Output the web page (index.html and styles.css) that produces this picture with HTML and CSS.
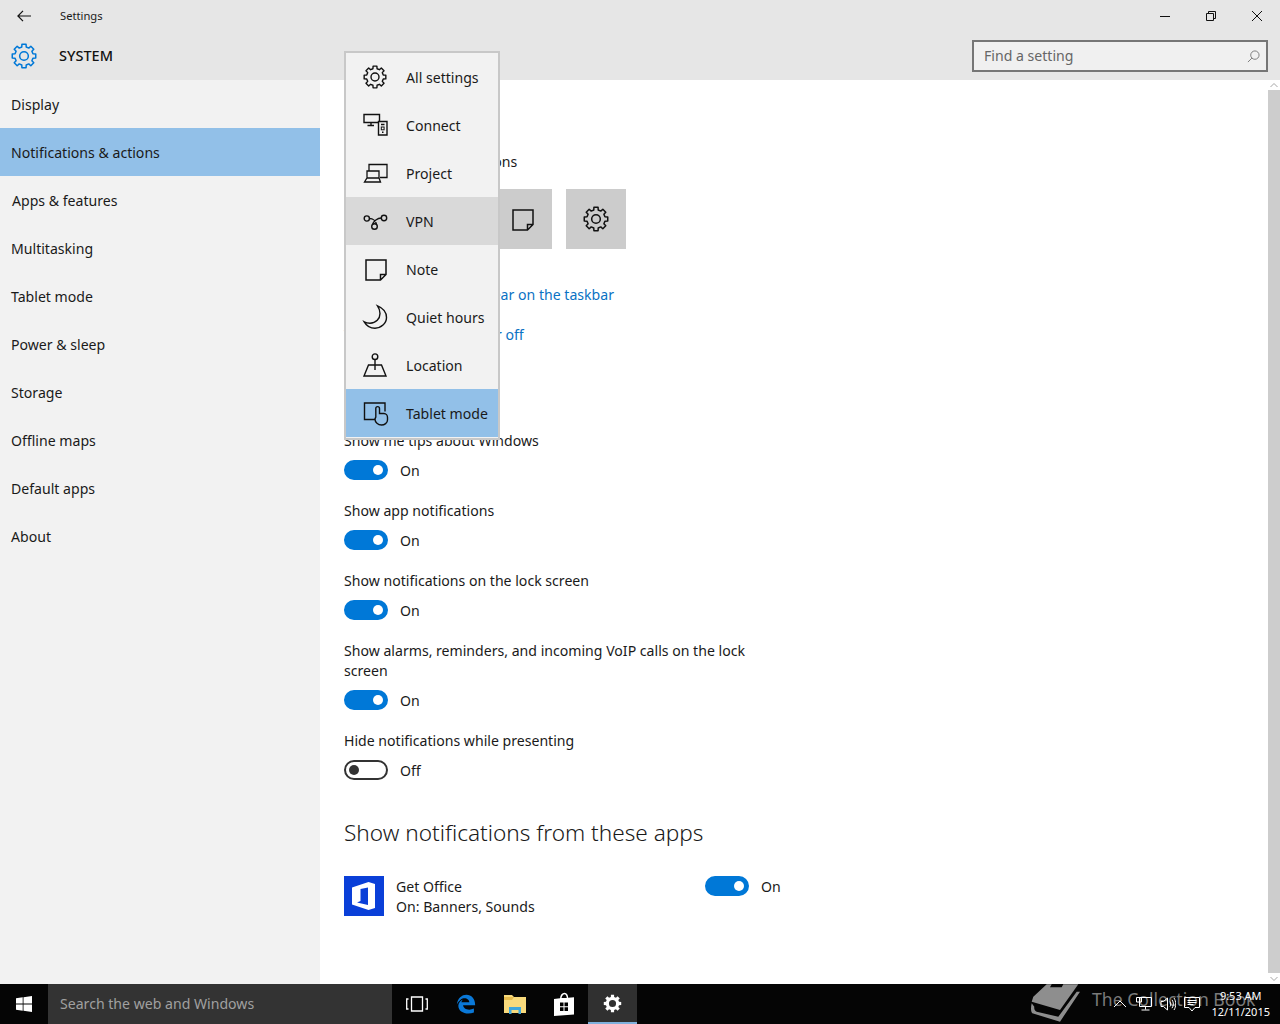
FILE: index.html
```html
<!DOCTYPE html>
<html lang="en">
<head>
<meta charset="utf-8">
<title>Settings</title>
<link rel="stylesheet" href="styles.css">
</head>
<body>
<svg class="defs" width="0" height="0" aria-hidden="true">
  <symbol id="gear" viewBox="0 0 24 24">
    <path fill="none" stroke="currentColor" stroke-width="1.4" stroke-linejoin="round" d="M20.25 9.94 22.83 10.09V13.91L20.25 14.06 19.29 16.38 21.01 18.31 18.31 21.01 16.38 19.29 14.06 20.25 13.91 22.83H10.09L9.94 20.25 7.62 19.29 5.69 21.01 2.99 18.31 4.71 16.38 3.75 14.06 1.17 13.91V10.09L3.75 9.94 4.71 7.62 2.99 5.69 5.69 2.99 7.62 4.71 9.94 3.75 10.09 1.17H13.91L14.06 3.75 16.38 4.71 18.31 2.99 21.01 5.69 19.29 7.62Z"/>
    <circle cx="12" cy="12" r="4" fill="none" stroke="currentColor" stroke-width="1.4"/>
  </symbol>
  <symbol id="note" viewBox="0 0 24 24">
    <path fill="none" stroke="currentColor" stroke-width="1.5" d="M3 3H23V17.500L17.500 23H3ZM23 17.500H17.500V23"/>
  </symbol>
</svg>

<div class="window">
  <header class="header">
    <div class="titlebar">
      <div class="title-left">
        <svg class="back" viewBox="0 0 14 12"><path fill="none" stroke="#111" stroke-width="1.2" d="M14 6H1M6 .8 .9 6 6 11.2"/></svg>
        <span class="app-name">Settings</span>
      </div>
      <div class="controls">
        <svg class="ctl" viewBox="0 0 12 12"><path stroke="#111" stroke-width="1" d="M1 6.5H11"/></svg>
        <svg class="ctl" viewBox="0 0 12 12"><path fill="none" stroke="#111" stroke-width="1" d="M1.500 3.500H8.500V10.500H1.500ZM3.500 3.500V1.500H10.500V8.500H8.500"/></svg>
        <svg class="ctl" viewBox="0 0 12 12"><path stroke="#111" stroke-width="1" d="M1 1 11 11M11 1 1 11"/></svg>
      </div>
    </div>
    <div class="subbar">
      <div class="section">
        <svg class="section-gear"><use href="#gear"/></svg>
        <span class="section-name">SYSTEM</span>
      </div>
      <div class="search">
        <span>Find a setting</span>
        <svg class="search-icon" viewBox="0 0 14 14"><path fill="none" stroke="#777" stroke-width="1" d="M13 5.500A4.500 4.500 0 1 1 4 5.500 4.500 4.500 0 1 1 13 5.500ZM5.300 8.700 1 13"/></svg>
      </div>
    </div>
  </header>

  <div class="main">
    <nav class="sidebar">
      <a class="nav-item">Display</a>
      <a class="nav-item is-active">Notifications &amp; actions</a>
      <a class="nav-item nav-item-wide">Apps &amp; features</a>
      <a class="nav-item">Multitasking</a>
      <a class="nav-item">Tablet mode</a>
      <a class="nav-item">Power &amp; sleep</a>
      <a class="nav-item">Storage</a>
      <a class="nav-item">Offline maps</a>
      <a class="nav-item">Default apps</a>
      <a class="nav-item">About</a>
    </nav>

    <section class="content">
      <h2 class="heading">Quick actions</h2>
      <p class="hint">Choose your quick actions</p>
      <div class="tiles">
        <div class="tile"></div>
        <div class="tile"></div>
        <div class="tile"><svg class="tile-icon"><use href="#note"/></svg></div>
        <div class="tile"><svg class="tile-gear"><use href="#gear"/></svg></div>
      </div>
      <a class="link link-first">Select which icons appear on the taskbar</a>
      <a class="link link-second">Turn system icons on or off</a>
      <h2 class="heading heading-notif">Notifications</h2>

      <div class="setting">
        <div class="setting-label">Show me tips about Windows</div>
        <div class="toggle-row"><span class="toggle is-on"><i></i></span><span class="toggle-text">On</span></div>
      </div>
      <div class="setting">
        <div class="setting-label">Show app notifications</div>
        <div class="toggle-row"><span class="toggle is-on"><i></i></span><span class="toggle-text">On</span></div>
      </div>
      <div class="setting">
        <div class="setting-label">Show notifications on the lock screen</div>
        <div class="toggle-row"><span class="toggle is-on"><i></i></span><span class="toggle-text">On</span></div>
      </div>
      <div class="setting">
        <div class="setting-label">Show alarms, reminders, and incoming VoIP calls on the lock screen</div>
        <div class="toggle-row"><span class="toggle is-on"><i></i></span><span class="toggle-text">On</span></div>
      </div>
      <div class="setting">
        <div class="setting-label">Hide notifications while presenting</div>
        <div class="toggle-row"><span class="toggle"><i></i></span><span class="toggle-text">Off</span></div>
      </div>

      <h2 class="heading heading-apps">Show notifications from these apps</h2>
      <div class="app-row">
        <div class="app-icon">
          <svg viewBox="0 0 40 40"><path fill="#fff" d="M8 11.500 24.500 6 31 8V32L24.500 34 8 28.500ZM13 26.500 24 29V11.500L16.500 13V25Z"/></svg>
        </div>
        <div class="app-text">
          <div>Get Office</div>
          <div>On: Banners, Sounds</div>
        </div>
        <div class="toggle-row"><span class="toggle is-on"><i></i></span><span class="toggle-text">On</span></div>
      </div>
    </section>

    <div class="scrollbar">
      <svg class="sb-arrow" viewBox="0 0 12 10"><path fill="none" stroke="#a6a6a6" stroke-width="1" d="M2.500 7 6 3.500 9.500 7"/></svg>
      <div class="sb-thumb"></div>
      <svg class="sb-arrow" viewBox="0 0 12 10"><path fill="none" stroke="#a6a6a6" stroke-width="1" d="M2.500 3 6 6.500 9.500 3"/></svg>
    </div>
  </div>

  <div class="menu">
    <div class="menu-item"><svg class="menu-icon"><use href="#gear"/></svg><span>All settings</span></div>
    <div class="menu-item">
      <svg class="menu-icon" viewBox="0 0 24 24"><path fill="none" stroke="#111" stroke-width="1.4" d="M15 9.500H1V1.500H16.500V8M4.500 12.500H11M8 9.500V12.500M15.500 8.500H24V22H15.500ZM18 11.500H21.500"/><rect x="18.300" y="14" width="2.800" height="2.800" fill="none" stroke="#111" stroke-width="1"/><rect x="19" y="18.500" width="1.500" height="1.500" fill="#111"/></svg>
      <span>Connect</span>
    </div>
    <div class="menu-item">
      <svg class="menu-icon" viewBox="0 0 24 24"><path fill="none" stroke="#111" stroke-width="1.3" d="M6 9.500V3.500H24V16.500H17M4 17V10H16V17M1.500 21 4 17H16L17.500 21Z"/></svg>
      <span>Project</span>
    </div>
    <div class="menu-item is-hover">
      <svg class="menu-icon" viewBox="0 0 24 24"><g fill="none" stroke="#111" stroke-width="1.4"><circle cx="3.800" cy="9.500" r="2.600"/><circle cx="21" cy="9" r="2.700"/><circle cx="11.500" cy="17.500" r="2.800"/><path d="M6.400 9.500C10 9.500 13 12 13.500 15.500M18.300 9C14.500 9 10.500 12 9.600 15.500"/></g></svg>
      <span>VPN</span>
    </div>
    <div class="menu-item"><svg class="menu-icon"><use href="#note"/></svg><span>Note</span></div>
    <div class="menu-item">
      <svg class="menu-icon" viewBox="0 0 24 24"><path fill="none" stroke="#111" stroke-width="1.4" d="M14.500 .800C20 3 23.500 7.500 23.500 12.500 23.500 18.500 18 23.200 12 23.200 7.500 23.200 3.500 20.800 1.200 16.800 3 17.800 5 18.200 7 18.200 13 18.200 17 13.800 17 8.500 17 6 16 3 14.500 .800Z"/></svg>
      <span>Quiet hours</span>
    </div>
    <div class="menu-item">
      <svg class="menu-icon" viewBox="0 0 24 24"><g fill="none" stroke="#111" stroke-width="1.4"><circle cx="12" cy="3.700" r="2.800"/><path d="M12 6.500V17M5.500 12H18.500L23 23H1Z"/></g></svg>
      <span>Location</span>
    </div>
    <div class="menu-item is-selected">
      <svg class="menu-icon" viewBox="0 0 24 24"><g fill="none" stroke="#111" stroke-width="1.4"><path d="M12 18.500H1.500V2H22V10.500"/><path d="M12.800 16V7.500C12.800 5 16.500 5 16.500 7.500V12.500H21C23 12.500 24.500 14.500 24.500 16.500V19C24.500 22 21.500 24 18.500 24 15 24 12 21.500 12 18Z"/></g></svg>
      <span>Tablet mode</span>
    </div>
  </div>
</div>

<footer class="taskbar">
  <div class="start">
    <svg viewBox="0 0 16 16"><path fill="#fff" d="M0 2.300 6.700 1.300V7.600H0ZM7.500 1.200 16 0V7.600H7.500ZM0 8.400H6.700V14.700L0 13.700ZM7.500 8.400H16V16L7.500 14.800Z"/></svg>
  </div>
  <div class="tb-search">Search the web and Windows</div>
  <div class="tb-item">
    <svg class="tb-taskview" viewBox="0 0 22 16"><path fill="none" stroke="#fff" stroke-width="1.300" d="M5.500 1H16.500V15H5.500ZM2.500 3H.7V13H2.500M19.500 3H21.300V13H19.500"/></svg>
  </div>
  <div class="tb-item">
    <svg class="tb-edge" viewBox="0 0 24 24"><path fill="#0a78d7" d="M1 12.500C2 5 7 1 12.500 1 18.500 1 23 5.500 23 13.500H8.500C9 18 15 20.500 21.500 17.500V22.300C12.500 25.500 2.500 22 2.800 13.800 3 10.500 5 8 8.500 6.500 7 8 6.800 9 6.500 10H16C16 6 10 3 5.500 7 3.800 8.300 2.200 10.300 1 12.500Z"/></svg>
  </div>
  <div class="tb-item">
    <svg class="tb-icon" viewBox="0 0 24 24"><path fill="#f8da7c" d="M1 3H9L11 5H23V21H1Z"/><path fill="#e6bb4c" d="M1 5H11L9 8H1Z"/><path fill="#3fa7dc" d="M6 15H18V22H15.500V18H8.500V22H6Z"/></svg>
  </div>
  <div class="tb-item">
    <svg class="tb-icon" viewBox="0 0 24 24"><path fill="#fff" fill-rule="evenodd" d="M2 7 8 6.300C8.300 3 10 .8 12.500 .8S16 3 16.200 5.800L22 5.200V22.500L2 24ZM9.500 6.100 14.800 5.900C14.500 3.500 13.700 2.200 12.500 2.200S10 3.700 9.500 6.100Z"/><path fill="#000" d="M8 10.500H11.500V14.300H8ZM12.500 10.500H16V14.300H12.500ZM8 15.300H11.500V19H8ZM12.500 15.300H16V19H12.500Z"/></svg>
  </div>
  <div class="tb-item is-open">
    <svg class="tb-settings" viewBox="0 0 24 24"><path fill="#fff" fill-rule="evenodd" d="M20.250 9.940 23 10V14L20.250 14.060 19.290 16.380 21.200 18.400 18.400 21.200 16.380 19.290 14.060 20.250 14 23H10L9.940 20.250 7.620 19.290 5.600 21.200 2.800 18.400 4.710 16.380 3.750 14.060 1 14V10L3.750 9.940 4.710 7.620 2.800 5.600 5.600 2.800 7.620 4.710 9.940 3.750 10 1H14L14.060 3.750 16.380 4.710 18.400 2.800 21.200 5.600 19.290 7.620ZM16.500 12A4.500 4.500 0 1 0 7.500 12 4.500 4.500 0 1 0 16.500 12Z"/></svg>
  </div>
  <div class="tray">
    <svg class="tray-icon" viewBox="0 0 16 16"><path fill="none" stroke="#fff" stroke-width="1" d="M2 11 8 5 14 11"/></svg>
    <svg class="tray-icon" viewBox="0 0 16 16"><path fill="none" stroke="#fff" stroke-width="1" d="M3.500 1.500H15.500V10.500H3.500ZM.5 1.500H5.500V6H.5ZM9.500 10.500V13.500M5.500 14H13.500"/></svg>
    <svg class="tray-icon" viewBox="0 0 16 16"><path fill="none" stroke="#fff" stroke-width="1" d="M1 5.500H3.500L7.500 2V14L3.500 10.500H1ZM10 5.500C11 7 11 9 10 10.500M12 3.800C13.800 6.300 13.800 9.700 12 12.200M14 2C16.300 5.500 16.300 10.500 14 14"/></svg>
    <svg class="tray-icon" viewBox="0 0 16 16"><path fill="none" stroke="#fff" stroke-width="1" d="M.5 1.500H15.500V11.500H11L8 15 5 11.500H.5ZM3.500 4.500H12.500M3.500 6.500H12.500M3.500 8.500H9.500"/></svg>
    <div class="clock"><div>9:53 AM</div><div>12/11/2015</div></div>
  </div>
</footer>

<div class="watermark">
  <svg class="wm-book" viewBox="0 0 52 40"><path fill="#8e8e8e" d="M16.700 .3H21.700L20 3.300H31.700L33.300 .3H48.300L30 26 1.700 17.700 3.300 12.700Z"/><path fill="#8e8e8e" d="M1.700 19.300C.5 24 1 28 2.300 29.300L30 37.700 50 7.700H46.700L28.300 32.700 6.700 27.700C4.500 26.500 4 24.500 4.300 22.700Z"/></svg>
  <span class="wm-text">The Collection Book</span>
</div>
</body>
</html>
```
FILE: styles.css
```css
* { box-sizing: border-box; }

html, body { margin: 0; padding: 0; }

body {
  width: 1280px;
  height: 1024px;
  overflow: hidden;
  position: relative;
  display: flex;
  flex-direction: column;
  font-family: "Noto Sans", "Open Sans", sans-serif;
  font-size: 14.1px;
  line-height: 20px;
  color: #1a1a1a;
  background: #fff;
}

.defs { position: absolute; }

.window {
  position: relative;
  flex: 1;
  display: flex;
  flex-direction: column;
  min-height: 0;
}

/* Header */
.header { height: 80px; background: #e6e6e6; flex: none; }

.titlebar {
  height: 32px;
  display: flex;
  justify-content: space-between;
  align-items: center;
}

.title-left { display: flex; align-items: center; }

.back { width: 14px; height: 12px; margin-left: 17px; }

.app-name { font-size: 11.2px; margin-left: 29px; }

.controls { display: flex; gap: 34px; margin-right: 17px; }

.ctl { width: 12px; height: 12px; display: block; }

.subbar {
  height: 48px;
  display: flex;
  justify-content: space-between;
  align-items: center;
  padding-right: 12px;
}

.section { display: flex; align-items: center; }

.section-gear { width: 26px; height: 26px; margin-left: 11px; color: #0078d7; }

.section-name { margin-left: 22px; margin-top: -2px; font-size: 14.5px; font-weight: 500; color: #111; }

.search {
  width: 296px;
  height: 32px;
  border: 2px solid #767676;
  background: #f0f0f0;
  display: flex;
  align-items: center;
  justify-content: space-between;
  padding: 0 6px 0 10px;
  color: #666;
}

.search-icon { width: 13px; height: 13px; }

/* Main */
.main { flex: 1; display: flex; min-height: 0; }

.sidebar { width: 320px; background: #f2f2f2; flex: none; }

.nav-item {
  display: flex;
  align-items: center;
  height: 48px;
  padding: 2px 0 0 11px;
}

.nav-item-wide { padding-left: 12px; }

.nav-item.is-active { background: #92c0e8; }

.content {
  flex: 1;
  padding: 18px 0 0 24px;
  min-width: 0;
  overflow: hidden;
}

.heading {
  margin: 0;
  font-size: 22.6px;
  line-height: 32px;
  font-weight: 300;
}

.heading-notif { margin-top: 39px; margin-bottom: 14px; }

.heading-apps { margin-top: 37px; margin-bottom: 27px; }

.hint { margin: 22px 0 17px; }

.tiles { display: flex; gap: 14px; }

.tile {
  width: 60px;
  height: 60px;
  background: #cccccc;
  display: flex;
  align-items: center;
  justify-content: center;
}

.tile-icon { width: 24px; height: 24px; color: #111; }

.tile-gear { width: 26px; height: 26px; color: #111; }

.link { display: block; color: #0a72c4; }

.link-first { margin-top: 36px; }

.link-second { margin-top: 20px; }

.setting { margin-bottom: 20px; width: 420px; }

.setting-label { padding-top: 1px; margin-bottom: 9px; }

.toggle-row { display: flex; align-items: center; height: 20px; }

.toggle {
  width: 44px;
  height: 20px;
  border-radius: 10px;
  border: 2px solid #333;
  display: flex;
  align-items: center;
  padding: 0 3px;
}

.toggle i { width: 10px; height: 10px; border-radius: 50%; background: #333; display: block; }

.toggle.is-on { background: #0078d7; border-color: #0078d7; justify-content: flex-end; }

.toggle.is-on i { background: #fff; }

.toggle-text { margin: 2px 0 0 12px; }

.app-row { display: flex; }

.app-icon { width: 40px; height: 40px; background: #0a3fd8; flex: none; }

.app-icon svg { width: 40px; height: 40px; display: block; }

.app-text { width: 321px; padding: 1px 0 0 12px; flex: none; }

/* Scrollbar */
.scrollbar {
  width: 12px;
  flex: none;
  background: #fff;
  display: flex;
  flex-direction: column;
}

.sb-arrow { width: 12px; height: 10px; flex: none; margin: 0; }

.sb-thumb { flex: 1; background: #cdcdcd; margin-bottom: 1px; }

/* Overlay menu */
.menu {
  position: absolute;
  left: 344px;
  top: 51px;
  width: 156px;
  height: 389px;
  border: 2px solid #c8c8c8;
  background: #f2f2f2;
}

.menu-item {
  height: 48px;
  display: flex;
  align-items: center;
  padding: 0 0 0 17px;
}

.menu-item span { margin-top: 2px; }

.menu-icon { width: 24px; height: 24px; color: #111; flex: none; margin-right: 19px; overflow: visible; }

.menu-item.is-hover { background: #d9d9d9; }

.menu-item.is-selected { background: #92c0e8; }

/* Taskbar */
.taskbar {
  height: 40px;
  flex: none;
  background: #050505;
  display: flex;
  align-items: stretch;
  color: #fff;
}

.start { width: 48px; display: flex; align-items: center; justify-content: center; }

.start svg { width: 16px; height: 16px; }

.tb-search {
  width: 344px;
  background: #333;
  color: #a0a0a0;
  display: flex;
  align-items: center;
  padding-left: 12px;
}

.tb-item {
  width: 49px;
  display: flex;
  align-items: center;
  justify-content: center;
}

.tb-item.is-open { background: #303030; border-bottom: 2px solid #7fb0dc; }

.tb-taskview { width: 22px; height: 16px; }

.tb-edge { width: 20px; height: 20px; }

.tb-icon { width: 24px; height: 24px; }

.tb-settings { width: 19px; height: 19px; }

.tray {
  margin-left: auto;
  display: flex;
  align-items: center;
  gap: 8px;
  padding-right: 10px;
  position: relative;
  z-index: 2;
}

.tray-icon { width: 16px; height: 16px; }

.clock { font-size: 11px; line-height: 16px; text-align: center; margin-left: 3px; }

/* Watermark overlay */
.watermark {
  position: absolute;
  z-index: 1;
  left: 1030px;
  top: 984px;
  height: 40px;
  display: flex;
  align-items: center;
  pointer-events: none;
}

.wm-book { width: 52px; height: 40px; }

.wm-text { margin-left: 10px; font-size: 17.6px; color: #7a7a7a; margin-top: -10px; }
```
